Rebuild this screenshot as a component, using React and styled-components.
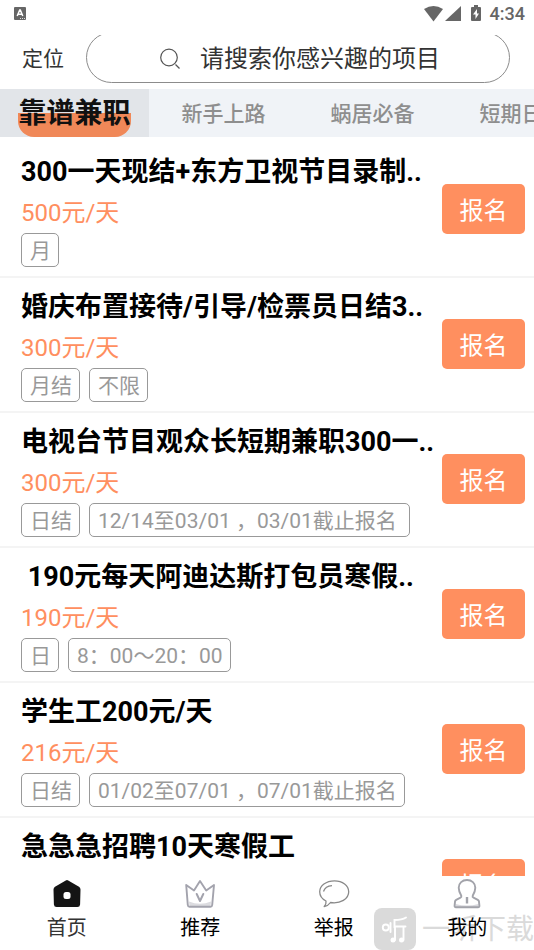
import styled, { createGlobalStyle } from "styled-components";

const GlobalStyle = createGlobalStyle`
  * {
    box-sizing: border-box;
  }
  body {
    margin: 0;
    background-color: #fff;
    font-family: Roboto, "Noto Sans CJK SC", sans-serif;
  }
  button,
  input {
    font-family: inherit;
  }
`;

const Page = styled.div`
  height: 100vh;
  display: flex;
  flex-direction: column;
  overflow: hidden;
  background-color: #fff;
`;

const StatusBar = styled.div`
  height: 35px;
  flex-shrink: 0;
  padding: 0 9px 8px 14px;
  display: flex;
  align-items: center;
  justify-content: space-between;
  color: #666;
`;

const StatusIcons = styled.div`
  display: flex;
  align-items: center;
`;

const Clock = styled.span`
  margin-left: 8px;
  font-size: 18px;
  line-height: 24px;
  font-weight: 500;
`;

const Header = styled.header`
  height: 54px;
  flex-shrink: 0;
  padding: 0 24px 0 22px;
  display: flex;
  align-items: flex-end;
  overflow: hidden;
`;

const Location = styled.button`
  width: 64px;
  height: 52px;
  margin-bottom: 6px;
  flex-shrink: 0;
  padding: 0;
  border: none;
  background: none;
  font-size: 21px;
  text-align: left;
  color: #333;
`;

const SearchBox = styled.label`
  flex: 1;
  height: 51px;
  margin-bottom: 6px;
  padding: 2px 0 0 4px;
  display: flex;
  align-items: center;
  justify-content: center;
  gap: 20px;
  border: 1px solid #8c8c8c;
  border-radius: 26px;
`;

const SearchInput = styled.input`
  width: 240px;
  padding: 0;
  border: none;
  outline: none;
  background: none;
  font-size: 24px;
  line-height: 36px;
  color: #333;
  &::placeholder {
    color: #333;
    opacity: 1;
  }
`;

const Tabs = styled.div`
  height: 48px;
  flex-shrink: 0;
  display: flex;
  overflow: hidden;
  background-color: #f0f3f7;
`;

const Tab = styled.button`
  width: 149px;
  height: 48px;
  flex-shrink: 0;
  padding: 0;
  display: flex;
  justify-content: center;
  border: none;
  background-color: ${(props) => (props.$active ? "#e2e5e9" : "transparent")};
  font-size: ${(props) => (props.$active ? "28px" : "21px")};
  font-weight: ${(props) => (props.$active ? 700 : 500)};
  line-height: 50px;
  color: ${(props) => (props.$active ? "#111" : "#8e8e8e")};
`;

const Highlight = styled.span`
  height: 48px;
  border-radius: 16px;
  background: linear-gradient(#f08858, #f08858) no-repeat 0 24px / 100% 24px;
`;

const JobList = styled.main`
  flex: 1;
  min-height: 0;
  padding-top: 6px;
  overflow-y: auto;
  scrollbar-width: none;
`;

const Job = styled.article`
  height: 135px;
  padding: 11px 9px 12px 21px;
  display: flex;
  align-items: center;
  justify-content: space-between;
  border-bottom: 2px solid #f4f4f4;
`;

const JobInfo = styled.div`
  flex: 1;
  min-width: 0;
  align-self: flex-start;
`;

const Title = styled.h2`
  margin: 0;
  font-size: 27px;
  line-height: 36px;
  font-weight: 700;
  white-space: pre;
  color: #000;
`;

const Price = styled.p`
  margin: 5px 0 2px;
  font-size: 24px;
  line-height: 36px;
  color: #ff8f5f;
`;

const TagRow = styled.div`
  display: flex;
  gap: 9px;
`;

const Tag = styled.span`
  height: 34px;
  padding: 0 7px 0 8px;
  border: 1px solid #999;
  border-radius: 5px;
  font-size: 21px;
  line-height: 34px;
  white-space: pre;
  color: #999;
`;

const ApplyButton = styled.button`
  width: 83px;
  height: 50px;
  flex-shrink: 0;
  padding: 0 0 2px;
  border: none;
  border-radius: 5px;
  background-color: #ff8f5f;
  font-size: 24px;
  color: #fff;
`;

const BottomNav = styled.nav`
  height: 74px;
  flex-shrink: 0;
  position: relative;
  display: grid;
  grid-template-columns: repeat(4, 1fr);
  background-color: #fff;
`;

const NavItem = styled.a`
  position: relative;
  z-index: 1;
  padding-top: 3px;
  display: flex;
  flex-direction: column;
  align-items: center;
  font-size: 20px;
  line-height: 34px;
  text-decoration: none;
  color: ${(props) => (props.$active ? "#333" : "#000")};
`;

const Watermark = styled.div`
  position: absolute;
  right: 0;
  bottom: 0;
  display: flex;
  align-items: flex-end;
  gap: 6px;
  font-size: 28px;
  line-height: 40px;
  color: #dadada;
`;

const KeyboardIcon = () => (
  <svg width="12" height="13" viewBox="0 0 12 13">
    <rect width="12" height="13" rx="1" fill="#666" />
    <path d="M3.200 9 5.700 3h.6L8.800 9M4 7.200h4" fill="none" stroke="#fff" strokeWidth="1.500" />
    <path d="M6 11.500h1M8 11.500h1M10 11.500h1" stroke="#ddd" strokeWidth="1" />
  </svg>
);

const SignalIcons = () => (
  <svg width="58" height="18" viewBox="0 0 58 18" fill="#666">
    <path d="M0 4Q9.500-2 19 4L9.500 16.500Z" />
    <path d="M37 1v15H21Z" />
    <path d="M50 0h4v2h2q1 0 1 1v12q0 1-1 1h-8q-1 0-1-1V3q0-1 1-1h2Z" />
    <path d="m53 4-4 5.500h2.500V14L55 8.500h-2Z" fill="#fff" />
  </svg>
);

const SearchIcon = () => (
  <svg width="20" height="22" viewBox="0 0 20 22" fill="none" stroke="#555" strokeWidth="1.200">
    <circle cx="9" cy="9.500" r="8.300" />
    <path d="m15.500 16.500 4 4" />
  </svg>
);

const HomeIcon = () => (
  <svg width="32" height="32" viewBox="0 0 32 32">
    <path
      d="M14.800 1.400q1.200-.8 2.400 0L28 7.800q1.500 1 1.500 2.700l-.4 15q-.2 2.500-2.700 2.500H5.600q-2.500 0-2.700-2.500L2.500 10.500Q2.500 8.800 4 7.800Z"
      fill="#141414"
    />
    <rect x="12.500" y="13" width="7" height="7" rx="2.500" fill="#fff" />
  </svg>
);

const CrownIcon = () => (
  <svg width="32" height="32" viewBox="0 0 32 32" fill="none" stroke="#a3a3ad" strokeLinejoin="round">
    <path d="M5 22.500q11 4.500 22 0l-.5 5h-21Z" fill="#dcdce0" stroke="none" />
    <path d="m2.200 6 7.800 5.500L16 2l6.200 9.500L30 6l-1.800 20q-.2 1.700-1.700 1.700h-21q-1.500 0-1.700-1.700Z" strokeWidth="1.900" />
    <path d="m12.700 15 3.300 7 3.300-7" strokeWidth="2" strokeLinecap="round" />
  </svg>
);

const BubbleIcon = () => (
  <svg width="32" height="32" viewBox="0 0 32 32" fill="none" stroke="#898989" strokeWidth="1.300">
    <path
      d="M16.500 1.800C8 1.800 1.700 6.800 1.700 12.800c0 4 2.500 7.300 6.300 9.200.3 2-.3 4-1.800 5.500 2.800-.5 4.800-1.800 6.300-4 10 1.500 18.200-3.500 18.200-10.700C30.700 6.500 24.500 1.800 16.500 1.800Z"
      strokeLinejoin="round"
    />
    <path d="M5.500 12.500C6.500 9.500 9.500 7 14 6.700" />
  </svg>
);

const UserIcon = () => (
  <svg width="32" height="32" viewBox="0 0 32 32" fill="none" stroke="#a2a3aa">
    <path d="M4.500 25q11.500 3 23 0v3.500h-23Z" fill="#d8d8dd" stroke="none" />
    <path
      d="M10.300 16.800C8.700 14 7.700 11.500 7.700 8.800 7.700 4 11.300 1 16 1s8.300 3 8.300 7.800c0 2.700-1 5.200-2.600 8-.4.900 0 1.500.8 1.900l4.300 2.100q1.100.6 1.200 1.800l.4 4.300q.1 1.400-1.400 1.400H5q-1.500 0-1.400-1.400l.4-4.300q.1-1.200 1.200-1.800l4.300-2.100q1.200-.6.800-1.900Z"
      strokeWidth="1.900"
      strokeLinejoin="round"
    />
    <path d="M16 18v6.500" strokeWidth="2.400" />
  </svg>
);

const WatermarkLogo = () => (
  <svg width="42" height="42" viewBox="0 0 42 42">
    <rect width="42" height="42" rx="8" fill="#dadada" />
    <g fill="none" stroke="#fff" strokeWidth="1.900" strokeLinecap="round">
      <circle cx="11.800" cy="19.500" r="3" />
      <path d="M16.500 15v9M32 9.500q-4 2.500-11.500 2.500v7.500M20.500 18.500h11M21 19v13M29.500 18.500V32" />
    </g>
    <g fill="#fff">
      <circle cx="19" cy="32" r="2.500" />
      <circle cx="27.500" cy="32" r="2.500" />
    </g>
  </svg>
);

const tabs = ["靠谱兼职", "新手上路", "蜗居必备", "短期日结"];

const jobs = [
  { title: "300一天现结+东方卫视节目录制..", price: "500元/天", tags: ["月"] },
  { title: "婚庆布置接待/引导/检票员日结3..", price: "300元/天", tags: ["月结", "不限"] },
  {
    title: "电视台节目观众长短期兼职300一..",
    price: "300元/天",
    tags: ["日结", "12/14至03/01 ，03/01截止报名 "],
  },
  { title: " 190元每天阿迪达斯打包员寒假..", price: "190元/天", tags: ["日", "8：00～20：00"] },
  {
    title: "学生工200元/天",
    price: "216元/天",
    tags: ["日结", "01/02至07/01 ，07/01截止报名"],
  },
  { title: "急急急招聘10天寒假工", price: "200元/天", tags: ["日结"] },
];

const navItems = [
  { label: "首页", icon: <HomeIcon /> },
  { label: "推荐", icon: <CrownIcon /> },
  { label: "举报", icon: <BubbleIcon /> },
  { label: "我的", icon: <UserIcon /> },
];

const App = () => {
  return (
    <>
      <GlobalStyle />
      <Page>
        <StatusBar>
          <KeyboardIcon />
          <StatusIcons>
            <SignalIcons />
            <Clock>4:34</Clock>
          </StatusIcons>
        </StatusBar>
        <Header>
          <Location>定位</Location>
          <SearchBox htmlFor="search">
            <SearchIcon />
            <SearchInput id="search" type="text" placeholder="请搜索你感兴趣的项目" />
          </SearchBox>
        </Header>
        <Tabs>
          {tabs.map((tab, i) => (
            <Tab key={tab} $active={i === 0}>
              {i === 0 ? <Highlight>{tab}</Highlight> : tab}
            </Tab>
          ))}
        </Tabs>
        <JobList>
          {jobs.map((job) => (
            <Job key={job.title}>
              <JobInfo>
                <Title>{job.title}</Title>
                <Price>{job.price}</Price>
                <TagRow>
                  {job.tags.map((tag) => (
                    <Tag key={tag}>{tag}</Tag>
                  ))}
                </TagRow>
              </JobInfo>
              <ApplyButton>报名</ApplyButton>
            </Job>
          ))}
        </JobList>
        <BottomNav>
          <Watermark>
            <WatermarkLogo />
            一听下载
          </Watermark>
          {navItems.map((item, i) => (
            <NavItem key={item.label} href="#" $active={i === 0}>
              {item.icon}
              {item.label}
            </NavItem>
          ))}
        </BottomNav>
      </Page>
    </>
  );
};

export default App;
